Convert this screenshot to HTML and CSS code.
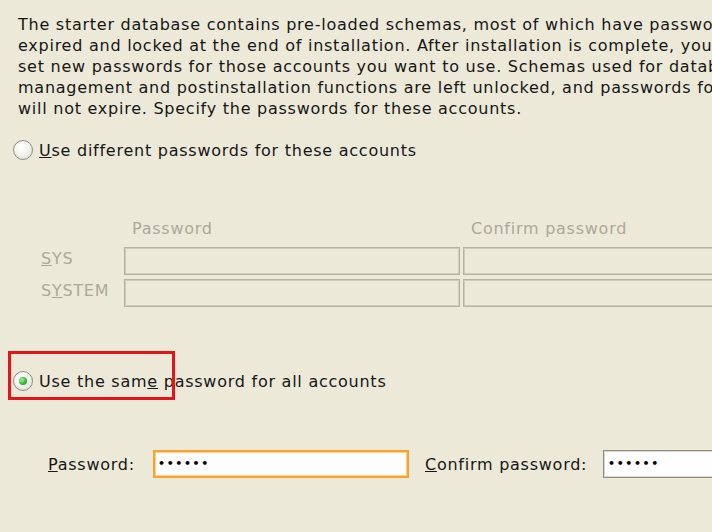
FILE: index.html
```html
<!DOCTYPE html>
<html>
<head>
<meta charset="utf-8">
<link rel="stylesheet" href="styles.css">
</head>
<body>
<div class="page">
  <div class="intro">
    <div class="line">The starter database contains pre-loaded schemas, most of which have passwords</div>
    <div class="line">expired and locked at the end of installation. After installation is complete, you must</div>
    <div class="line">set new passwords for those accounts you want to use. Schemas used for database</div>
    <div class="line">management and postinstallation functions are left unlocked, and passwords for these</div>
    <div class="line">will not expire. Specify the passwords for these accounts.</div>
  </div>

  <div class="radio-row first">
    <span class="radio"></span>
    <span class="radio-label"><u>U</u>se different passwords for these accounts</span>
  </div>

  <div class="grid">
    <span class="corner"></span>
    <span class="head">Password</span>
    <span class="head">Confirm password</span>
    <span class="acct"><u>S</u>YS</span>
    <span class="field disabled"></span>
    <span class="field disabled"></span>
    <span class="acct">S<u>Y</u>STEM</span>
    <span class="field disabled"></span>
    <span class="field disabled"></span>
  </div>

  <div class="radio-row second">
    <span class="radio checked"></span>
    <span class="radio-label">Use the sam<u>e</u> password for all accounts</span>
    <span class="highlight"></span>
  </div>

  <div class="pw-row">
    <span class="pw-label"><u>P</u>assword:</span>
    <span class="field focused"><span class="dots">&#8226;&#8226;&#8226;&#8226;&#8226;&#8226;</span></span>
    <span class="pw-label confirm"><u>C</u>onfirm password:</span>
    <span class="field normal"><span class="dots">&#8226;&#8226;&#8226;&#8226;&#8226;&#8226;</span></span>
  </div>
</div>
</body>
</html>
```

FILE: styles.css
```css
html, body {
  margin: 0;
  padding: 0;
  background: #ece9d8;
  overflow: hidden;
}
body {
  width: 712px;
  height: 532px;
  font-family: "DejaVu Sans", Verdana, sans-serif;
  font-size: 16px;
  letter-spacing: 0.75px;
  color: #161616;
}
.page {
  width: 900px;
  padding-top: 14px;
}
.intro {
  margin-left: 18px;
}
.line {
  white-space: nowrap;
  line-height: 21px;
  height: 21px;
}
.radio-row {
  position: relative;
  display: flex;
  align-items: center;
  height: 20px;
  padding-left: 13px;
  gap: 6px;
  white-space: nowrap;
}
.radio-row.first {
  margin-top: 21px;
}
.radio-row.second {
  margin-top: 64px;
}
.radio {
  width: 18px;
  height: 18px;
  border-radius: 50%;
  border: 1px solid #8f8f88;
  background: radial-gradient(circle at 40% 35%, #ffffff 0%, #f4f3ee 45%, #d9d6c8 100%);
  flex: none;
  position: relative;
}
.radio.checked::after {
  content: "";
  position: absolute;
  left: 5px;
  top: 5px;
  width: 8px;
  height: 8px;
  border-radius: 50%;
  background: radial-gradient(circle at 35% 35%, #a6f2a0 0%, #3fbf3a 50%, #1f8a1e 100%);
}
.highlight {
  position: absolute;
  left: 8px;
  top: -20px;
  width: 161px;
  height: 43px;
  border: 3px solid #e3141c;
}
.grid {
  display: grid;
  grid-template-columns: 80px 336px 300px;
  grid-template-rows: 24px 28px 28px;
  column-gap: 3px;
  row-gap: 4px;
  margin-top: 59px;
  margin-left: 41px;
  color: #aca899;
}
.grid .head {
  line-height: 20px;
  padding-left: 8px;
}
.acct {
  line-height: 24px;
}
.field {
  display: block;
  box-sizing: border-box;
  height: 28px;
}
.field.disabled {
  border: 1px solid #b5b2a2;
  box-shadow: inset 0 0 0 1px #cfccbd;
  background: #ece9d8;
}
.pw-row {
  display: flex;
  align-items: center;
  margin-top: 59px;
  padding-left: 48px;
  white-space: nowrap;
}
.pw-label {
  width: 105px;
  flex: none;
}
.pw-label.confirm {
  width: 178px;
  margin-left: 16px;
}
.field.focused {
  width: 256px;
  flex: none;
  border: 2px solid #f6a333;
  box-shadow: inset 0 0 0 1px #fbcf84;
  background: #fff;
}
.field.normal {
  width: 200px;
  flex: none;
  border: 1px solid #8e8e8a;
  box-shadow: inset 0 0 0 1px #d6d3c8;
  background: #fff;
}
.dots {
  display: block;
  font-size: 11px;
  font-weight: bold;
  letter-spacing: 1.6px;
  line-height: 24px;
  padding-left: 3px;
  color: #000;
}
.field.normal .dots {
  line-height: 26px;
  padding-left: 4px;
}
```
